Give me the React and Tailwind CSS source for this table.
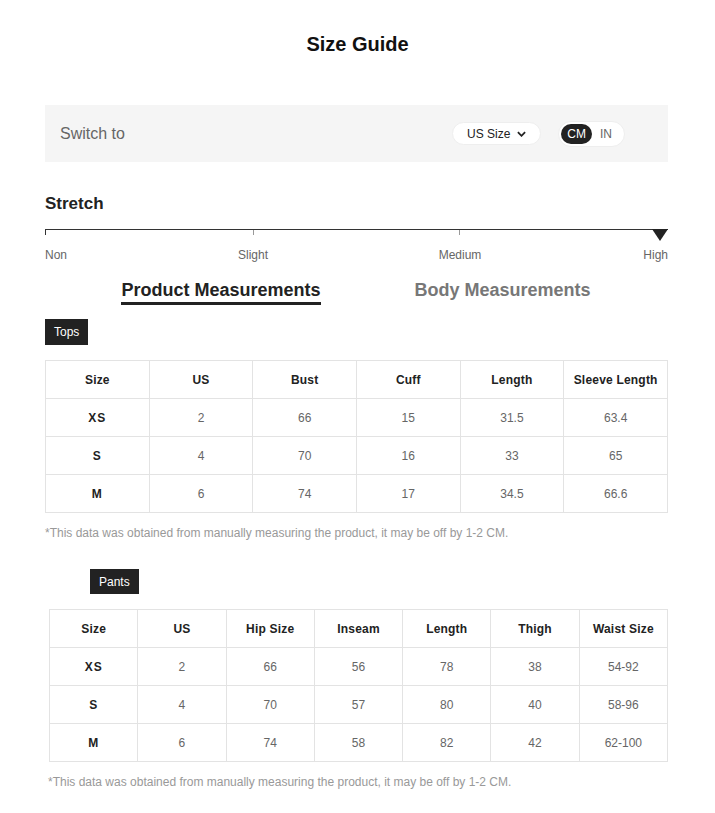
import React, { useState } from 'react';

const tops = {
  head: ['Size', 'US', 'Bust', 'Cuff', 'Length', 'Sleeve Length'],
  rows: [
    ['XS', '2', '66', '15', '31.5', '63.4'],
    ['S', '4', '70', '16', '33', '65'],
    ['M', '6', '74', '17', '34.5', '66.6'],
  ],
};

const pants = {
  head: ['Size', 'US', 'Hip Size', 'Inseam', 'Length', 'Thigh', 'Waist Size'],
  rows: [
    ['XS', '2', '66', '56', '78', '38', '54-92'],
    ['S', '4', '70', '57', '80', '40', '58-96'],
    ['M', '6', '74', '58', '82', '42', '62-100'],
  ],
};

const SizeTable = ({ data }) => (
  <table className="w-full table-fixed border-collapse text-[12px]">
    <thead>
      <tr>
        {data.head.map((h) => (
          <th key={h} className="h-[38px] border border-[#e3e3e3] font-bold text-[#222] tracking-[0.2px]">
            {h}
          </th>
        ))}
      </tr>
    </thead>
    <tbody>
      {data.rows.map((row, i) => (
        <tr key={i}>
          {row.map((cell, j) => (
            <td
              key={j}
              className={
                'h-[38px] border border-[#e3e3e3] text-center ' +
                (j === 0 ? 'font-bold text-[#222] tracking-[1px]' : 'text-[#666]')
              }
            >
              {cell}
            </td>
          ))}
        </tr>
      ))}
    </tbody>
  </table>
);

const App = () => {
  const [unit, setUnit] = useState('CM');
  const [tab, setTab] = useState('product');

  return (
    <div className="w-[715px] min-h-[813px] bg-white font-['Liberation_Sans',Arial,sans-serif] text-[#222]">
      {/* title */}
      <h1 className="pt-[32px] text-center text-[20px] font-bold leading-[24px] text-[#111]">Size Guide</h1>

      <div className="ml-[45px] mt-[49px] w-[623px]">
        {/* switch bar */}
        <div className="flex h-[57px] items-center bg-[#f5f5f5] pl-[15px] pr-[43px]">
          <span className="text-[16px] text-[#666]">Switch to</span>
          <div className="ml-auto flex items-center gap-[17px]">
            <button className="flex h-[23px] items-center gap-[7px] rounded-full border border-[#eee] bg-white px-[14px] text-[12px] text-[#222]">
              US Size
              <svg width="9" height="6" viewBox="0 0 10 6">
                <path d="M1 1l4 4 4-4" fill="none" stroke="#222" strokeWidth="2" />
              </svg>
            </button>
            <div className="flex h-[26px] items-center gap-[2px] rounded-full border border-[#eee] bg-white pl-[2px] pr-[6px] text-[12px]">
              {['CM', 'IN'].map((u) => (
                <button
                  key={u}
                  onClick={() => setUnit(u)}
                  className={
                    'flex h-[20px] items-center rounded-full px-[6px] ' +
                    (unit === u ? 'bg-[#222] text-white' : 'text-[#666]')
                  }
                >
                  {u}
                </button>
              ))}
            </div>
          </div>
        </div>

        {/* stretch */}
        <h2 className="mt-[32px] text-[17px] font-bold leading-[20px]">Stretch</h2>
        <div className="relative mt-[15px] h-[8px] border-t border-[#333]">
          <span className="absolute left-0 top-0 h-[5px] w-px bg-[#333]" />
          <span className="absolute left-[208px] top-0 h-[5px] w-px bg-[#999]" />
          <span className="absolute left-[414px] top-0 h-[5px] w-px bg-[#999]" />
          <svg className="absolute right-0 top-[-1px]" width="16" height="12" viewBox="0 0 16 12">
            <path d="M0 0h16L8 12z" fill="#222" />
          </svg>
        </div>
        <div className="relative mt-[11px] h-[14px] text-[12px] leading-[14px] text-[#666]">
          <span className="absolute left-0">Non</span>
          <span className="absolute left-[208px] -translate-x-1/2">Slight</span>
          <span className="absolute left-[415px] -translate-x-1/2">Medium</span>
          <span className="absolute right-0">High</span>
        </div>

        {/* tabs */}
        <div className="mt-[18px] flex">
          <button onClick={() => setTab('product')} className="flex w-[352px] justify-center">
            <span
              className={
                'border-b-[3px] pb-[1px] text-[18px] font-bold leading-[21px] ' +
                (tab === 'product' ? 'border-[#222] text-[#222]' : 'border-transparent text-[#777]')
              }
            >
              Product Measurements
            </span>
          </button>
          <button onClick={() => setTab('body')} className="flex w-[211px] justify-center">
            <span
              className={
                'border-b-[3px] pb-[1px] text-[18px] font-bold leading-[21px] ' +
                (tab === 'body' ? 'border-[#222] text-[#222]' : 'border-transparent text-[#777]')
              }
            >
              Body Measurements
            </span>
          </button>
        </div>

        {/* tops */}
        <div className="mt-[14px] inline-flex h-[26px] items-center bg-[#222] px-[9px] text-[12px] text-white">Tops</div>
        <div className="mt-[15px]">
          <SizeTable data={tops} />
        </div>
        <p className="mt-[11px] text-[12px] text-[#999]">
          *This data was obtained from manually measuring the product, it may be off by 1-2 CM.
        </p>

        {/* pants */}
        <div className="ml-[45px] mt-[27px] inline-flex h-[25px] items-center bg-[#222] px-[9px] text-[12px] text-white">Pants</div>
        <div className="ml-[4px] mt-[15px]">
          <SizeTable data={pants} />
        </div>
        <p className="ml-[3px] mt-[11px] text-[12px] text-[#999]">
          *This data was obtained from manually measuring the product, it may be off by 1-2 CM.
        </p>
      </div>
    </div>
  );
};

export default App;
